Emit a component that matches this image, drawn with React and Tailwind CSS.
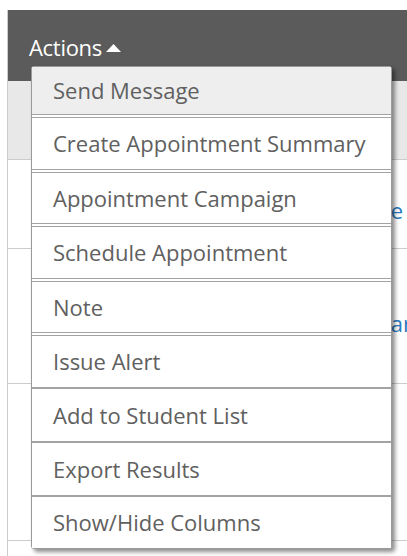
import React from "react";

const actions = [
  { label: "Send Message", h: "h-[47px]", cls: "bg-[#eeeeee]" },
  { label: "Create Appointment Summary", h: "h-[51px]", gap: true },
  { label: "Appointment Campaign", h: "h-[50px]", gap: true },
  { label: "Schedule Appointment", h: "h-[51px]", gap: true },
  { label: "Note", h: "h-[50px]", gap: true },
  { label: "Issue Alert", h: "h-[51px]", gap: true },
  { label: "Add to Student List", h: "h-[52px]" },
  { label: "Export Results", h: "h-[52px]" },
  { label: "Show/Hide Columns", h: "h-[51px]", last: true },
];

const ActionsMenu = () => (
  <ul className="absolute left-[31px] top-[66px] w-[361px] rounded-[3px] border border-[#9a9a9a] bg-white shadow-[3px_3px_4px_rgba(0,0,0,0.45)]">
    {actions.map((a, i) => (
      <li
        key={a.label}
        className={`${i > 0 ? "border-t" : ""} ${a.last ? "" : "border-b"} ${a.gap && i < 5 ? "mb-[2px]" : ""} ${i === 0 ? "mb-[2px]" : ""} border-[#a3a3a3] ${a.cls || "bg-white"}`}
      >
        <div className={`${a.h} flex items-center pl-[21px] text-[22px] text-[#606060]`}>{a.label}</div>
      </li>
    ))}
  </ul>
);

export default function App() {
  return (
    <div className="relative h-[556px] w-[407px] overflow-hidden bg-white font-['Open_Sans',sans-serif]">
      <div className="ml-[7px] mt-[10px] border-l border-[#cccccc]">
        <div className="h-[71px] bg-[#5b5b5b] pl-[21px] pt-[22px]">
          <button className="flex items-center gap-[4px] text-[22px] leading-[30px] tracking-[-0.3px] text-white">
            Actions
            <svg width="15" height="8" viewBox="0 0 15 8" className="mt-[2px]">
              <path d="M0 8 L7.5 0 L15 8 Z" fill="#fff" />
            </svg>
          </button>
        </div>
        <div className="h-[79px] border-b border-[#cccccc] bg-[#e8e8e8]" />
        <div className="flex h-[89px] items-center justify-end border-b border-[#cccccc] pr-[4px] pt-[12px]">
          <a className="whitespace-nowrap text-[22px] text-[#2a7bc0]">Complete</a>
        </div>
        <div className="flex h-[135px] items-center justify-end border-b border-[#cccccc] pt-[14px]">
          <a className="-mr-[5px] whitespace-nowrap text-[22px] text-[#2a7bc0]">Seminar</a>
        </div>
        <div className="h-[157px] border-b border-[#cccccc]" />
        <div className="h-[40px]" />
      </div>
      <ActionsMenu />
    </div>
  );
}
